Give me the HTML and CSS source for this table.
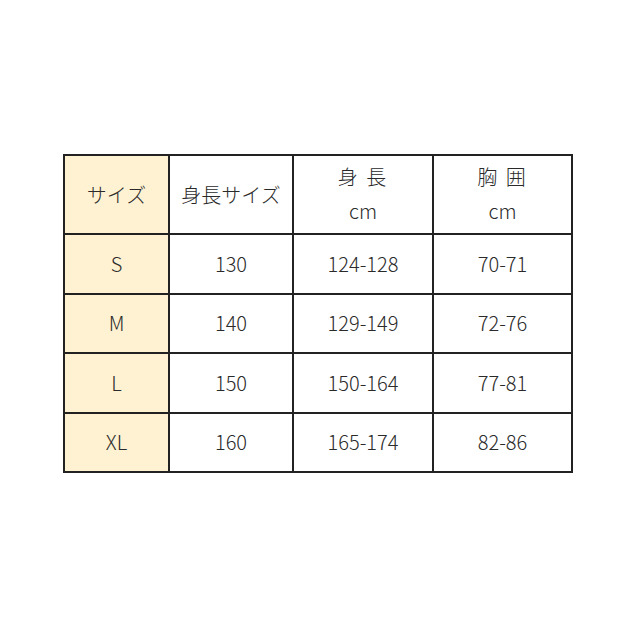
FILE: index.html
```html
<!DOCTYPE html>
<html lang="ja">
<head>
<meta charset="utf-8">
<link rel="stylesheet" href="styles.css">
</head>
<body>
<div class="page">
<table class="size-table">
  <colgroup>
    <col class="c1"><col class="c2"><col class="c3"><col class="c4">
  </colgroup>
  <tr class="head">
    <td class="label">サイズ</td>
    <td>身長サイズ</td>
    <td><div class="two"><span class="sp">身 長</span><span>cm</span></div></td>
    <td><div class="two"><span class="sp">胸 囲</span><span>cm</span></div></td>
  </tr>
  <tr><td class="label">S</td><td>130</td><td>124-128</td><td>70-71</td></tr>
  <tr><td class="label">M</td><td>140</td><td>129-149</td><td>72-76</td></tr>
  <tr><td class="label">L</td><td>150</td><td>150-164</td><td>77-81</td></tr>
  <tr><td class="label">XL</td><td>160</td><td>165-174</td><td>82-86</td></tr>
</table>
</div>
</body>
</html>
```
FILE: styles.css
```css
html, body {
  margin: 0;
  padding: 0;
  background: #fff;
}
.page {
  width: 640px;
  height: 640px;
  display: flex;
  align-items: flex-start;
  padding: 154px 0 0 63px;
  box-sizing: border-box;
}
.size-table {
  border-collapse: collapse;
  table-layout: fixed;
  width: 508px;
  font-family: "Noto Sans CJK JP", "Noto Sans", sans-serif;
  font-size: 20px;
  font-weight: 300;
  color: #2a2a2a;
}
.c1 { width: 105px; }
.c2 { width: 124px; }
.c3 { width: 140px; }
.c4 { width: 139px; }
.size-table td {
  border: 2px solid #222;
  text-align: center;
  vertical-align: middle;
  height: 57.5px;
  padding: 0;
  line-height: 1;
}
.size-table tr.head td {
  height: 77px;
}
.size-table td.label {
  background: #fff2d2;
}
.two {
  display: flex;
  flex-direction: column;
  align-items: center;
  gap: 14px;
  padding-bottom: 2px;
}
.sp {
  letter-spacing: 2px;
}
```
